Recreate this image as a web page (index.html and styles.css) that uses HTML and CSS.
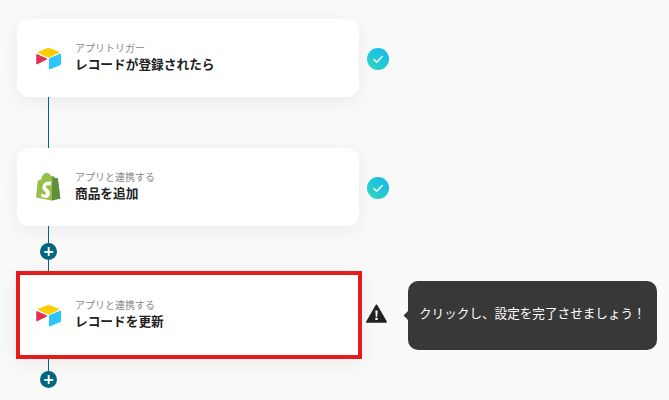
FILE: index.html
```html
<!DOCTYPE html>
<html lang="ja">
<head>
  <meta charset="UTF-8">
  <meta name="viewport" content="width=device-width, initial-scale=1">
  <title>フロー設定</title>
  <link rel="stylesheet" href="styles.css">
</head>
<body>
  <div class="flow">
    <div class="step">
      <div class="card">
        <svg class="logo" viewBox="0 0 25 23" width="25" height="23">
          <path class="logo-yellow" d="M12.500 1.300 2 5.300 12.500 10.300 23 5.300z"/>
          <path class="logo-blue" d="M13.500 11.500 24.500 7V17.500L13.500 22z"/>
          <path class="logo-red" d="M.8 7.500V17L10.800 12z"/>
        </svg>
        <div class="card-text">
          <div class="card-label">アプリトリガー</div>
          <div class="card-title">レコードが登録されたら</div>
        </div>
      </div>
      <svg class="status" viewBox="0 0 22 22" width="22" height="22">
        <defs>
          <linearGradient id="checkFill" x1="0" y1="1" x2="1" y2="0">
            <stop offset="0" stop-color="#2fd9bd"/>
            <stop offset="1" stop-color="#14b5f2"/>
          </linearGradient>
        </defs>
        <circle cx="11" cy="11" r="11" fill="url(#checkFill)"/>
        <path d="M6.500 11.300l3.100 3 5.900-6" fill="none" stroke="#fff" stroke-width="1.500"/>
      </svg>
    </div>

    <div class="connector connector-long"><span class="line"></span></div>

    <div class="step">
      <div class="card">
        <svg class="logo" viewBox="0 0 25 28" width="25" height="28">
          <path fill="#95bf47" d="M21.800 5.400c0-.1-.1-.2-.2-.2l-2.800-.2-2-2c-.2-.2-.6-.1-.7-.1l-1 .3C14.500 1.800 13.700.5 12.200.5h-.1C11.700 0 11.200-.2 10.800-.2 7.300-.2 5.600 4.200 5.100 6.400l-2.500.8c-.8.2-.8.3-.9 1L0 24.500l15.800 3 8.600-1.900L21.800 5.400z"/>
          <path fill="#5e8e3e" d="M21.600 5.200l-2.800-.2-2-2c-.1-.1-.2-.1-.3-.1l-.7 24.600 8.600-1.900L21.800 5.400c0-.1-.1-.2-.2-.2z"/>
          <path fill="#fff" transform="translate(2.500 0)" d="M12.700 9.700l-1 3.100s-1.100-.6-2.400-.6c-1.900 0-2 1.200-2 1.500 0 1.700 4.300 2.300 4.300 6.200 0 3.100-2 5-4.600 5-3.100 0-4.700-1.900-4.700-1.900l.8-2.800s1.600 1.400 3 1.400c.9 0 1.300-.7 1.300-1.200 0-2.200-3.500-2.300-3.500-5.900 0-3 2.200-6 6.600-6 1.600 0 2.200.200 2.200.200z"/>
        </svg>
        <div class="card-text">
          <div class="card-label">アプリと連携する</div>
          <div class="card-title">商品を追加</div>
        </div>
      </div>
      <svg class="status" viewBox="0 0 22 22" width="22" height="22">
        <circle cx="11" cy="11" r="11" fill="url(#checkFill)"/>
        <path d="M6.500 11.300l3.100 3 5.900-6" fill="none" stroke="#fff" stroke-width="1.500"/>
      </svg>
    </div>

    <div class="connector">
      <span class="line line-a"></span>
      <span class="plus">+</span>
      <span class="line line-b"></span>
    </div>

    <div class="step step-current">
      <div class="card card-current">
        <svg class="logo" viewBox="0 0 25 23" width="25" height="23">
          <path class="logo-yellow" d="M12.500 1.300 2 5.300 12.500 10.300 23 5.300z"/>
          <path class="logo-blue" d="M13.500 11.500 24.500 7V17.500L13.500 22z"/>
          <path class="logo-red" d="M.8 7.500V17L10.800 12z"/>
        </svg>
        <div class="card-text">
          <div class="card-label">アプリと連携する</div>
          <div class="card-title">レコードを更新</div>
        </div>
      </div>
      <svg class="warning" viewBox="0 0 22 20" width="21" height="19">
        <path fill="#222" stroke="#222" stroke-width="2" stroke-linejoin="round" d="M11 1.500 1 18.800h20z"/>
        <path fill="#fff" d="M9.800 6.800h2.400l-.4 6.600h-1.600zM9.800 14.600h2.400v2.300H9.800z"/>
      </svg>
      <div class="tooltip">クリックし、設定を完了させましょう！</div>
    </div>

    <div class="connector connector-end">
      <span class="line line-c"></span>
      <span class="plus">+</span>
    </div>
  </div>
</body>
</html>
```

FILE: styles.css
```css
body {
  margin: 0;
  padding: 0;
  background: #fafafa;
  color: #222;
  font-family: "Noto Sans CJK JP", "Noto Sans", sans-serif;
  overflow: hidden;
}
.flow {
  display: flex;
  flex-direction: column;
  padding: 19px 0 0 17px;
}
.step {
  display: flex;
  align-items: center;
}
.step-current {
  margin-left: -1px;
}
.card {
  display: flex;
  align-items: center;
  box-sizing: border-box;
  width: 342px;
  height: 78px;
  padding-left: 19px;
  background: #fff;
  border-radius: 12px;
  box-shadow: 0 4px 20px rgba(0, 0, 0, 0.07);
}
.card-current {
  width: 346px;
  height: 88px;
  border: 4px solid #e51c1c;
  border-radius: 0;
  padding-left: 16px;
}
.logo {
  flex: none;
}
.logo-yellow,
.logo-blue,
.logo-red {
  stroke-linejoin: round;
  stroke-width: 1;
}
.logo-yellow {
  fill: #ffcc00;
  stroke: #ffcc00;
}
.logo-blue {
  fill: #2dc5ff;
  stroke: #2dc5ff;
}
.logo-red {
  fill: #e2304f;
  stroke: #e2304f;
}
.card-text {
  margin-left: 14px;
  margin-top: -3px;
}
.card-label {
  font-size: 10px;
  line-height: 14px;
  color: #888;
}
.card-title {
  font-size: 12.700px;
  line-height: 18px;
  font-weight: 700;
  color: #222;
}
.status {
  flex: none;
  margin-left: 8px;
  margin-top: 2px;
}
.warning {
  flex: none;
  margin-left: 4px;
  margin-top: -3px;
}
.connector {
  display: flex;
  flex-direction: column;
  align-items: center;
  width: 17px;
  margin-left: 23px;
}
.line {
  display: block;
  width: 1px;
  background: #00687f;
}
.connector-long .line {
  height: 51px;
}
.line-a {
  height: 17px;
}
.line-b {
  height: 11px;
}
.line-c {
  height: 12px;
}
.plus {
  display: flex;
  align-items: center;
  justify-content: center;
  width: 17px;
  height: 17px;
  border-radius: 50%;
  background: #04677f;
  color: #fff;
  font-family: "DejaVu Sans", sans-serif;
  font-size: 14px;
  font-weight: 700;
  line-height: 17px;
}
.tooltip {
  position: relative;
  box-sizing: border-box;
  width: 249px;
  height: 69px;
  margin-left: 21px;
  padding: 0 11px;
  background: #383838;
  border-radius: 10px;
  color: #fff;
  font-size: 12.600px;
  line-height: 63px;
  white-space: nowrap;
}
.tooltip::before {
  content: "";
  position: absolute;
  left: -3px;
  top: 31px;
  width: 7px;
  height: 7px;
  background: #383838;
  transform: rotate(45deg);
}
```
